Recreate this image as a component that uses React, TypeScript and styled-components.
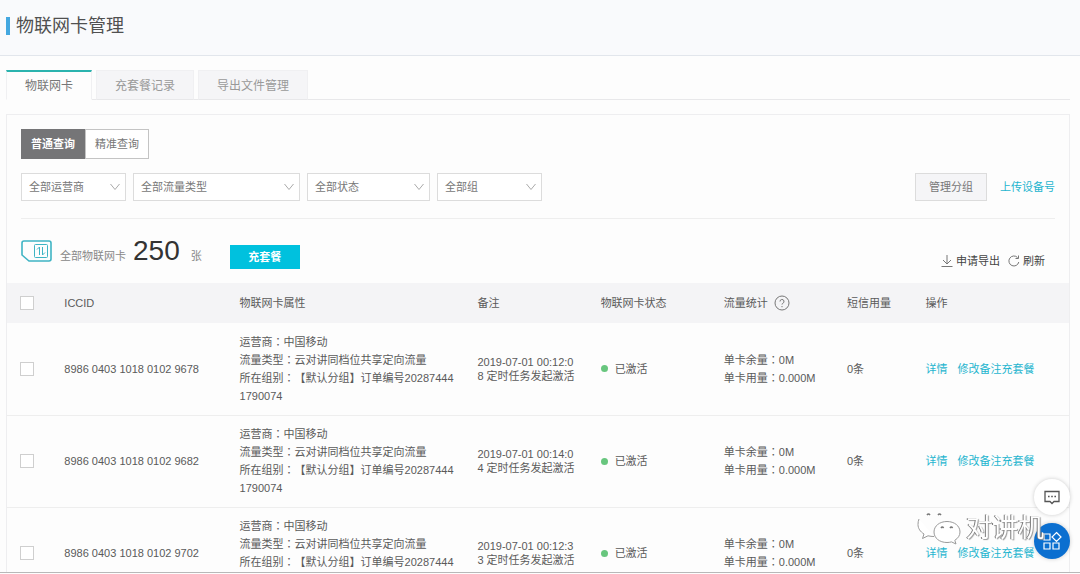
import React from "react";
import styled, { createGlobalStyle, css } from "styled-components";

const GlobalStyle = createGlobalStyle`
  *, *::before, *::after { box-sizing: border-box; }
  body {
    margin: 0;
    background: #fdfdfd;
    color: #5a5a5a;
    font-family: "Liberation Sans", "Noto Sans CJK SC", sans-serif;
    font-size: 11px;
    line-height: 18px;
  }
  button, select { font: inherit; cursor: pointer; border-radius: 0; }
  a { color: #1fb5cf; text-decoration: none; }
`;

const Shell = styled.div`
  height: calc(100vh - 1px);
  overflow: hidden;
  border-bottom: 1px solid #b8b8b8;
`;

const PageHeader = styled.header`
  display: flex;
  align-items: center;
  height: 56px;
  padding: 0 6px 4px;
  background: #f9fafc;
  border-bottom: 1px solid #e2e6ec;
`;

const Title = styled.h1`
  margin: 0;
  padding-left: 6px;
  border-left: 4px solid #44a8e0;
  color: #505050;
  font-size: 18px;
  font-weight: 400;
  line-height: 18px;
`;

const Content = styled.main`
  padding: 14px 10px 0 6px;
`;

const Tabs = styled.div`
  display: flex;
  gap: 4px;
  height: 30px;
  margin-bottom: 14px;
  border-bottom: 1px solid #e8e8ea;
`;

const Tab = styled.button<{ $active?: boolean }>`
  height: 30px;
  padding: 1px 18px 0;
  border: 1px solid #f0f0f2;
  border-bottom-color: #e8e8ea;
  background: #f5f5f7;
  color: #999;
  font-size: 12px;
  ${(p) =>
    p.$active &&
    css`
      padding-top: 0;
      border-top: 2px solid #2bb3ae;
      border-bottom-color: #fdfdfd;
      background: #fdfdfd;
      color: #777;
    `}
`;

const Panel = styled.section`
  border: 1px solid #eeeef0;
`;

const Filters = styled.div`
  margin: 0 14px;
  padding: 14px 0 17px;
  border-bottom: 1px solid #eeeeee;
`;

const Modes = styled.div`
  display: flex;
  margin-bottom: 14px;
`;

const Mode = styled.button<{ $active?: boolean }>`
  width: 64px;
  height: 30px;
  padding: 0;
  border: 1px solid ${(p) => (p.$active ? "#757577" : "#c4c4c4")};
  background: ${(p) => (p.$active ? "#757577" : "#fff")};
  color: ${(p) => (p.$active ? "#fff" : "#777")};
  font-weight: ${(p) => (p.$active ? 700 : 400)};
`;

const FilterRow = styled.div`
  display: flex;
  align-items: center;
  gap: 7px;
`;

const SelectBox = styled.div<{ $width: number }>`
  display: grid;
  align-items: center;
  width: ${(p) => p.$width}px;

  select, svg { grid-area: 1 / 1; }
  select {
    appearance: none;
    width: 100%;
    height: 28px;
    padding: 0 24px 0 7px;
    border: 1px solid #dcdcdc;
    background: #fff;
    color: #777;
  }
  svg {
    justify-self: end;
    margin-right: 6px;
    pointer-events: none;
  }
`;

const FilterActions = styled.div`
  display: flex;
  align-items: center;
  gap: 13px;
  margin-left: auto;
`;

const GroupButton = styled.button`
  width: 72px;
  height: 28px;
  padding: 0;
  border: 1px solid #dcdcdc;
  background: #f5f5f7;
  color: #777;
`;

const Summary = styled.div`
  display: flex;
  align-items: center;
  height: 64px;
  padding: 0 24px 0 14px;
`;

const Total = styled.p`
  display: flex;
  align-items: baseline;
  gap: 7px;
  margin: 0 28px 0 8px;
  color: #888;

  strong {
    color: #333;
    font-size: 28px;
    font-weight: 400;
    line-height: 32px;
  }
  span:last-child { margin-left: 4px; }
`;

const RechargeButton = styled.button`
  width: 70px;
  height: 24px;
  margin-top: 12px;
  padding: 0;
  border: 0;
  background: #00c1de;
  color: #fff;
  font-weight: 700;
`;

const Tools = styled.div`
  display: flex;
  gap: 8px;
  margin: 20px 0 0 auto;
`;

const Tool = styled.button`
  display: flex;
  align-items: center;
  gap: 3px;
  padding: 0;
  border: 0;
  background: none;
  color: #444;
`;

const CardTable = styled.table`
  width: 100%;
  border-collapse: collapse;
  table-layout: fixed;

  th, td {
    padding: 0;
    text-align: left;
    font-weight: 400;
    vertical-align: middle;
  }
  th { height: 40px; background: #f4f4f6; }
  td { height: 92px; border-bottom: 1px solid #eeeeee; }
  th:first-child, td:first-child { padding-left: 13px; }
`;

const Check = styled.input`
  display: block;
  appearance: none;
  width: 14px;
  height: 14px;
  margin: 0;
  border: 1px solid #cfcfcf;
  background: #fff;
`;

const HeadWithHelp = styled.span`
  display: flex;
  align-items: center;
  gap: 6px;
`;

const Attributes = styled.div`
  max-width: 216px;
  word-break: break-all;
  text-spacing-trim: space-all;
`;

const Colon = styled.span`
  font-family: "Noto Sans CJK TC", sans-serif;
  line-height: 1;
`;

const Remark = styled.div`
  max-width: 100px;
  line-height: 14px;
  word-break: break-all;
`;

const Status = styled.span`
  display: flex;
  align-items: center;
  gap: 7px;

  &::before {
    content: "";
    width: 7px;
    height: 7px;
    border-radius: 50%;
    background: #68c67e;
  }
`;

const RowActions = styled.div`
  display: flex;
  white-space: nowrap;

  a:first-child { margin-right: 10px; }
`;

const Watermark = styled.div`
  position: fixed;
  right: 36px;
  bottom: 26px;
  display: flex;
  align-items: center;
  gap: 5px;
  color: #fff;
  font-size: 26px;
  line-height: 40px;
  text-shadow: -1px 0 0 #777, 1px 1px 1px #999;
  pointer-events: none;
`;

const FloatButton = styled.button<{ $primary?: boolean }>`
  position: fixed;
  right: 10px;
  bottom: ${(p) => (p.$primary ? 15 : 59)}px;
  display: grid;
  place-items: center;
  width: 36px;
  height: 36px;
  padding: 0;
  border: 0;
  && { border-radius: 50%; }
  background: ${(p) => (p.$primary ? "#0b6fd0" : "#fff")};
  color: ${(p) => (p.$primary ? "#fff" : "#555")};
  box-shadow: 0 0 4px rgba(0, 0, 0, 0.2);
`;

const filters = [
  { label: "全部运营商", width: 105 },
  { label: "全部流量类型", width: 167 },
  { label: "全部状态", width: 123 },
  { label: "全部组", width: 105 },
];

const cards = [
  { iccid: "8986 0403 1018 0102 9678", time: "2019-07-01 00:12:08" },
  { iccid: "8986 0403 1018 0102 9682", time: "2019-07-01 00:14:04" },
  { iccid: "8986 0403 1018 0102 9702", time: "2019-07-01 00:12:33" },
];

function Field({ label, value }: { label: string; value: string }) {
  return (
    <div>
      {label}
      <Colon>：</Colon>
      {value}
    </div>
  );
}

function SimIcon() {
  return (
    <svg width="31" height="22" viewBox="0 0 31 22" fill="none" stroke="#3fb4c4">
      <path d="M3 1h25a2 2 0 0 1 2 2v16a2 2 0 0 1-2 2H8L1 15V3a2 2 0 0 1 2-2z" strokeWidth="1.600" />
      <rect x="13.500" y="4.500" width="13" height="13" rx="1" />
      <path d="M16 9.500l2.500-2.500v8M21.500 7v8l2.500-2.500" />
    </svg>
  );
}

function WechatMark() {
  return (
    <svg width="44" height="36" viewBox="0 0 44 36" fill="#fff" stroke="#999" strokeWidth="1">
      <path d="M2 9C1.300 10.700 1 12.500 1 14.500c0 4 2.300 7.200 6 9.500l-1.500 4.500 5.500-2.700c2 .5 4 .7 6 .7" />
      <path d="M30 11.500c-7.500 0-13 4.500-13 10.500s5.500 10.500 13 10.500c1.600 0 3-.2 4.500-.6L39 34l-1.200-3.700C41 28.300 43 25.500 43 22c0-6-5.500-10.500-13-10.500z" />
      <path d="M10 5q1.500-2 3 0M21 5q1.500-2 3 0M24 18q1.300-2 2.600 0M33 18q1.300-2 2.600 0" fill="none" stroke="#777" strokeWidth="1.500" />
    </svg>
  );
}

export default function App() {
  return (
    <Shell>
      <GlobalStyle />
      <PageHeader>
        <Title>物联网卡管理</Title>
      </PageHeader>
      <Content>
        <Tabs role="tablist">
          <Tab role="tab" aria-selected="true" $active>物联网卡</Tab>
          <Tab role="tab" aria-selected="false">充套餐记录</Tab>
          <Tab role="tab" aria-selected="false">导出文件管理</Tab>
        </Tabs>
        <Panel>
          <Filters>
            <Modes>
              <Mode $active>普通查询</Mode>
              <Mode>精准查询</Mode>
            </Modes>
            <FilterRow>
              {filters.map((f) => (
                <SelectBox key={f.label} $width={f.width}>
                  <select aria-label={f.label}>
                    <option>{f.label}</option>
                  </select>
                  <svg width="10" height="8" viewBox="0 0 10 8" fill="none" stroke="#aaa">
                    <path d="M.5 1 5 6.500 9.500 1" />
                  </svg>
                </SelectBox>
              ))}
              <FilterActions>
                <GroupButton>管理分组</GroupButton>
                <a href="#upload">上传设备号</a>
              </FilterActions>
            </FilterRow>
          </Filters>
          <Summary>
            <SimIcon />
            <Total>
              <span>全部物联网卡</span>
              <strong>250</strong>
              <span>张</span>
            </Total>
            <RechargeButton>充套餐</RechargeButton>
            <Tools>
              <Tool>
                <svg width="12" height="12" viewBox="0 0 12 12" fill="none" stroke="#777">
                  <path d="M6 0v8.500M2 5l4 4 4-4M.5 11.500h11" />
                </svg>
                申请导出
              </Tool>
              <Tool>
                <svg width="12" height="12" viewBox="0 0 12 12" fill="none" stroke="#777">
                  <path d="M10.800 7A5 5 0 1 1 9.500 2.500M10.500.5v3h-3" />
                </svg>
                刷新
              </Tool>
            </Tools>
          </Summary>
          <CardTable>
            <colgroup>
              <col style={{ width: "5.4%" }} />
              <col style={{ width: "16.5%" }} />
              <col style={{ width: "22.4%" }} />
              <col style={{ width: "11.6%" }} />
              <col style={{ width: "11.6%" }} />
              <col style={{ width: "11.6%" }} />
              <col style={{ width: "7.4%" }} />
              <col />
            </colgroup>
            <thead>
              <tr>
                <th><Check type="checkbox" aria-label="全选" /></th>
                <th>ICCID</th>
                <th>物联网卡属性</th>
                <th>备注</th>
                <th>物联网卡状态</th>
                <th>
                  <HeadWithHelp>
                    流量统计
                    <svg width="16" height="16" viewBox="0 0 16 16" fill="none" stroke="#777">
                      <circle cx="8" cy="8" r="7" />
                      <path d="M6 6.500a2 2 0 1 1 2.800 1.800c-.6.300-.8.600-.8 1.200M8 11v1.200" />
                    </svg>
                  </HeadWithHelp>
                </th>
                <th>短信用量</th>
                <th>操作</th>
              </tr>
            </thead>
            <tbody>
              {cards.map((card) => (
                <tr key={card.iccid}>
                  <td><Check type="checkbox" aria-label={card.iccid} /></td>
                  <td>{card.iccid}</td>
                  <td>
                    <Attributes>
                      <Field label="运营商" value="中国移动" />
                      <Field label="流量类型" value="云对讲同档位共享定向流量" />
                      <Field label="所在组别" value="【默认分组】订单编号202874441790074" />
                    </Attributes>
                  </td>
                  <td><Remark>{card.time} 定时任务发起激活</Remark></td>
                  <td><Status>已激活</Status></td>
                  <td>
                    <Field label="单卡余量" value="0M" />
                    <Field label="单卡用量" value="0.000M" />
                  </td>
                  <td>0条</td>
                  <td>
                    <RowActions>
                      <a href="#detail">详情</a>
                      <a href="#remark">修改备注</a>
                      <a href="#recharge">充套餐</a>
                    </RowActions>
                  </td>
                </tr>
              ))}
            </tbody>
          </CardTable>
        </Panel>
      </Content>
      <FloatButton aria-label="消息">
        <svg width="16" height="15" viewBox="0 0 16 15" fill="none" stroke="currentColor" strokeWidth="1.300">
          <path d="M1 1.500h14v10h-5l-2 2-2-2H1z" />
          <path d="M4 6.500h1.600M7.200 6.500h1.600M10.400 6.500H12" strokeWidth="1.600" />
        </svg>
      </FloatButton>
      <FloatButton aria-label="应用" $primary>
        <svg width="20" height="20" viewBox="0 0 20 20" fill="none" stroke="currentColor" strokeWidth="1.200">
          <path d="M2 3h6v6H2zM2 12h6v6H2zM11 12h6v6h-6zM14.500 1.500 19 6l-4.500 4.500L10 6z" />
        </svg>
      </FloatButton>
      <Watermark>
        <WechatMark />
        对讲机
      </Watermark>
    </Shell>
  );
}
